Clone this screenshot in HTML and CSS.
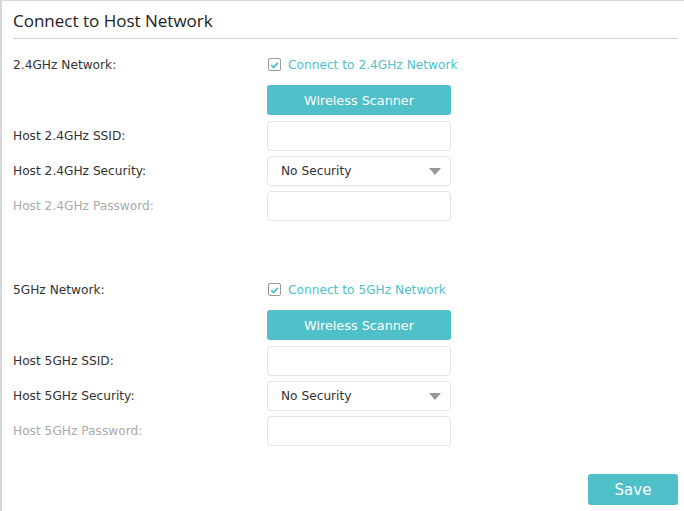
FILE: index.html
```html
<!DOCTYPE html>
<html lang="en">
<head>
    <meta charset="UTF-8">
    <title>Connect to Host Network</title>
    <link rel="stylesheet" href="styles.css">
</head>
<body>
    <div class="panel">
        <h2 class="title">Connect to Host Network</h2>

        <div class="section">
            <div class="row">
                <label class="label">2.4GHz Network:</label>
                <label class="check"><span class="box"><svg viewBox="0 0 12 12" width="12" height="12"><path d="M2.5 6.2 L5 8.6 L9.6 3.6" fill="none" stroke="#4fbfc9" stroke-width="2"/></svg></span>Connect to 2.4GHz Network</label>
            </div>
            <div class="row scan">
                <span class="label"></span>
                <button class="btn">Wireless Scanner</button>
            </div>
            <div class="row">
                <label class="label">Host 2.4GHz SSID:</label>
                <input class="field" type="text">
            </div>
            <div class="row">
                <label class="label">Host 2.4GHz Security:</label>
                <div class="field select">No Security<span class="arrow"></span></div>
            </div>
            <div class="row">
                <label class="label muted">Host 2.4GHz Password:</label>
                <input class="field" type="text">
            </div>
        </div>

        <div class="section second">
            <div class="row">
                <label class="label">5GHz Network:</label>
                <label class="check"><span class="box"><svg viewBox="0 0 12 12" width="12" height="12"><path d="M2.5 6.2 L5 8.6 L9.6 3.6" fill="none" stroke="#4fbfc9" stroke-width="2"/></svg></span>Connect to 5GHz Network</label>
            </div>
            <div class="row scan">
                <span class="label"></span>
                <button class="btn">Wireless Scanner</button>
            </div>
            <div class="row">
                <label class="label">Host 5GHz SSID:</label>
                <input class="field" type="text">
            </div>
            <div class="row">
                <label class="label">Host 5GHz Security:</label>
                <div class="field select">No Security<span class="arrow"></span></div>
            </div>
            <div class="row">
                <label class="label muted">Host 5GHz Password:</label>
                <input class="field" type="text">
            </div>
        </div>

        <div class="footer">
            <button class="btn save">Save</button>
        </div>
    </div>
</body>
</html>
```

FILE: styles.css
```css
body {
    margin: 0;
    font-family: "DejaVu Sans", Verdana, sans-serif;
    font-size: 12.2px;
    color: #333;
    background: #fff;
}
.panel {
    height: 511px;
    box-sizing: border-box;
    border-top: 1px solid #d6d6d6;
    border-left: 2px solid #d6d6d6;
    padding: 0 6px 0 11px;
}
.title {
    margin: 0;
    padding: 11px 0 8px 0;
    font-family: "Open Sans", sans-serif;
    font-weight: normal;
    font-size: 17px;
    color: #222;
    border-bottom: 1px solid #cfcfcf;
    line-height: 18px;
}
.section { padding-top: 17px; }
.section.second { padding-top: 55px; }
.row {
    display: flex;
    align-items: center;
    margin-bottom: 5px;
}
.row:first-child { margin-bottom: 12px; }
.row.scan { margin-bottom: 6px; }
.label {
    width: 254px;
    flex: none;
    color: #333;
}
.label.muted { color: #aaa; }
.check {
    display: flex;
    align-items: center;
    color: #4fbfc9;
    height: 17px;
}
.box {
    width: 11px;
    height: 11px;
    border: 1px solid #999;
    border-radius: 2px;
    margin: 0 7px 0 1px;
    display: flex;
    align-items: center;
    justify-content: center;
}
.btn {
    width: 184px;
    height: 30px;
    border: none;
    border-radius: 3px;
    background: #4fbfc9;
    color: #fff;
    font-family: "DejaVu Sans", Verdana, sans-serif;
    font-size: 12.8px;
    padding: 0;
}
.field {
    width: 184px;
    height: 30px;
    box-sizing: border-box;
    border: 1px solid #e3e3e3;
    border-radius: 4px;
    background: #fff;
    font: inherit;
    padding: 0 13px;
}
.select {
    display: flex;
    align-items: center;
    justify-content: space-between;
    color: #333;
}
.arrow {
    width: 0;
    height: 0;
    border-left: 6px solid transparent;
    border-right: 6px solid transparent;
    border-top: 7px solid #999;
    margin-right: -4px;
}
.footer {
    display: flex;
    justify-content: flex-end;
    margin-top: 28px;
}
.btn.save {
    width: 90px;
    height: 31px;
    font-size: 15px;
}
```
